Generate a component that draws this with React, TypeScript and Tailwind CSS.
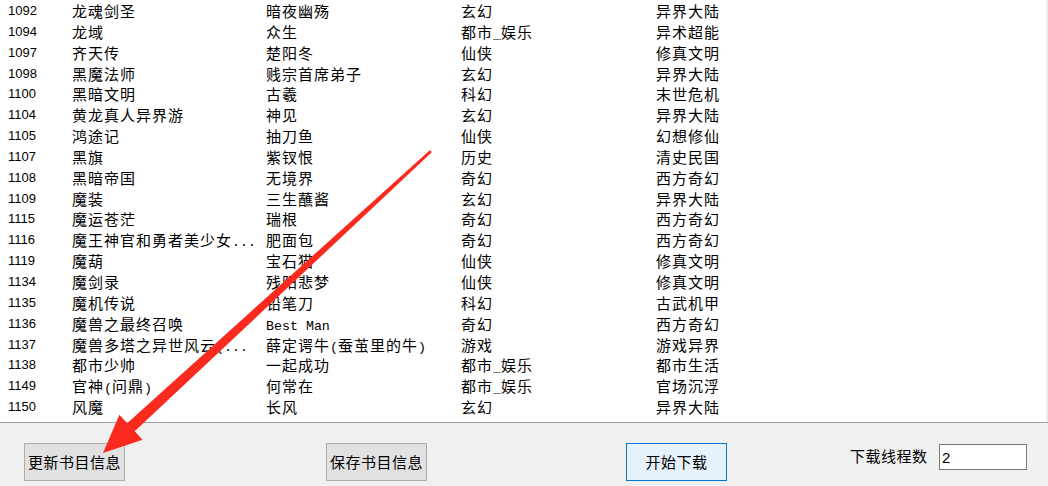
import React from 'react'

// 书目列表：编号 / 书名 / 作者 / 类别 / 子类
const rows: [string, string, string, string, string][] = [
  ['1092', '龙魂剑圣', '暗夜幽殇', '玄幻', '异界大陆'],
  ['1094', '龙域', '众生', '都市_娱乐', '异术超能'],
  ['1097', '齐天传', '楚阳冬', '仙侠', '修真文明'],
  ['1098', '黑魔法师', '贱宗首席弟子', '玄幻', '异界大陆'],
  ['1100', '黑暗文明', '古羲', '科幻', '末世危机'],
  ['1104', '黄龙真人异界游', '神见', '玄幻', '异界大陆'],
  ['1105', '鸿途记', '抽刀鱼', '仙侠', '幻想修仙'],
  ['1107', '黑旗', '紫钗恨', '历史', '清史民国'],
  ['1108', '黑暗帝国', '无境界', '奇幻', '西方奇幻'],
  ['1109', '魔装', '三生蘸酱', '玄幻', '异界大陆'],
  ['1115', '魔运苍茫', '瑞根', '奇幻', '西方奇幻'],
  ['1116', '魔王神官和勇者美少女...', '肥面包', '奇幻', '西方奇幻'],
  ['1119', '魔葫', '宝石猫', '仙侠', '修真文明'],
  ['1134', '魔剑录', '残阳悲梦', '仙侠', '修真文明'],
  ['1135', '魔机传说', '铅笔刀', '科幻', '古武机甲'],
  ['1136', '魔兽之最终召唤', 'Best Man', '奇幻', '西方奇幻'],
  ['1137', '魔兽多塔之异世风云(...', '薛定谔牛(蚕茧里的牛)', '游戏', '游戏异界'],
  ['1138', '都市少帅', '一起成功', '都市_娱乐', '都市生活'],
  ['1149', '官神(问鼎)', '何常在', '都市_娱乐', '官场沉浮'],
  ['1150', '风魔', '长风', '玄幻', '异界大陆'],
]

// half-width runs use a mono face so they take 8px each, like the original list font
function Cell({ text }: { text: string }) {
  const parts = text.split(/([\x20-\x7e]+)/)
  return (
    <div className="whitespace-nowrap overflow-hidden">
      {parts.map((p, i) =>
        i % 2 === 1 ? (
          <span key={i} className="font-['Liberation_Mono',monospace] text-[13.3px] tracking-normal">
            {p}
          </span>
        ) : (
          <span key={i}>{p}</span>
        )
      )}
    </div>
  )
}

function Arrow() {
  return (
    <svg className="absolute inset-0 pointer-events-none" width="1048" height="486" viewBox="0 0 1048 486">
      <polygon
        fill="#fb2a1f"
        points="431.0,153.1 134.7,431.3 142.5,439.8 103,453 119.4,414.7 127.2,423.2 429.0,150.9"
      />
      <circle cx="430" cy="152" r="1.5" fill="#fb2a1f" />
    </svg>
  )
}

export default function App() {
  return (
    <div className="relative w-[1048px] h-[486px] overflow-hidden bg-[#f0f0f0] text-black">
      <div className="flex h-[423px] border-b border-[#a0a0a0]">
        <div className="flex-1 bg-white overflow-hidden pt-[1px] pl-2 font-['Noto_Sans_CJK_SC',sans-serif] text-[15px] tracking-[1px]">
          {rows.map((r) => (
            <div
              key={r[0]}
              className="grid grid-cols-[64px_194px_195px_195px_1fr] h-[20.85px] leading-[20.85px]"
            >
              <div className="font-['Liberation_Sans',sans-serif] text-[13px] tracking-normal">{r[0]}</div>
              <Cell text={r[1]} />
              <Cell text={r[2]} />
              <Cell text={r[3]} />
              <Cell text={r[4]} />
            </div>
          ))}
        </div>
        <div className="w-[2px] bg-[#ececec]" />
      </div>

      <div className="flex items-start h-[63px] font-['Noto_Sans_CJK_SC',sans-serif] text-[15px] tracking-[0.5px]">
        <button className="ml-[24px] mt-[20px] w-[101px] h-[38px] bg-[#e1e1e1] border border-[#adadad]">
          更新书目信息
        </button>
        <button className="ml-[201px] mt-[20px] w-[101px] h-[38px] bg-[#e1e1e1] border border-[#adadad]">
          保存书目信息
        </button>
        <button className="ml-[199px] mt-[20px] w-[101px] h-[38px] bg-[#e5f1fb] border border-[#0078d7]">
          开始下载
        </button>
        <div className="ml-[123px] mt-[21px] h-[26px] flex items-center">
          <span className="w-[89px] pb-[2px]">下载线程数</span>
          <input
            readOnly
            value="2"
            className="w-[88px] h-[26px] bg-white border border-[#7a7a7a] pl-[2px] outline-none font-['Liberation_Sans',sans-serif] text-[15px]"
          />
        </div>
      </div>

      <Arrow />
    </div>
  )
}
